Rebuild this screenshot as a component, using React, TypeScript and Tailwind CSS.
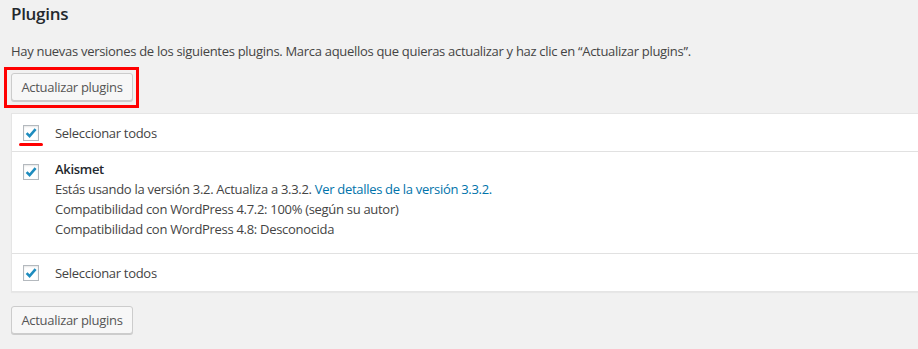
import React from "react";

const font = { fontFamily: '"Segoe UI", "Open Sans", "Noto Sans", sans-serif' };

function Check() {
  return (
    <span className="relative inline-flex h-[16px] w-[16px] shrink-0 items-center justify-center border border-[#b4b9be] bg-white shadow-[inset_0_1px_2px_rgba(0,0,0,0.1)]">
      <svg width="14" height="14" viewBox="0 0 14 14" className="absolute left-[0px] top-[0px]">
        <path d="M2.6 7.2 L5.6 10.2 L11.6 3.2" fill="none" stroke="#1e8cbe" strokeWidth="2.6" strokeLinecap="butt" strokeLinejoin="miter" />
      </svg>
    </span>
  );
}

function WPButton() {
  return (
    <button className="h-[28px] w-[122px] rounded-[3px] border border-[#cccccc] bg-[#f7f7f7] text-[13px] leading-[26px] tracking-[-0.3px] text-[#555555] shadow-[0_1px_0_#cccccc]">
      Actualizar plugins
    </button>
  );
}

export default function App() {
  return (
    <div className="h-[349px] w-full overflow-hidden bg-[#f1f1f1] pl-[11px] tracking-[-0.3px] text-[#444444]" style={font}>
      <h2 className="pt-[3px] text-[17px] font-semibold leading-[22px] text-[#23282d]">Plugins</h2>
      <p className="mt-[16px] text-[13px] leading-[20px]">
        Hay nuevas versiones de los siguientes plugins. Marca aquellos que quieras actualizar y haz clic en “Actualizar plugins”.
      </p>
      <div className="relative mt-[12px] w-[122px]">
        <WPButton />
        <div className="pointer-events-none absolute left-[-7px] top-[-6px] h-[41px] w-[135px] border-[3px] border-[#ff0000]" />
      </div>
      <div className="-mr-[20px] mt-[12px] border border-[#e5e5e5] bg-white shadow-[0_1px_1px_rgba(0,0,0,0.04)]">
        <div className="relative flex items-center pb-[10px] pl-[11px] pt-[11px] text-[13px] leading-[16px]">
          <Check />
          <span className="ml-[16px]">Seleccionar todos</span>
          <span className="absolute left-[7px] top-[29px] h-[2.5px] w-[24px] rounded-full bg-[#ff0000]" />
        </div>
        <div className="flex border-t border-[#e1e1e1] pb-[14px] pl-[11px] pt-[7px] text-[13px] leading-[20px]">
          <div className="pt-[5px]">
            <Check />
          </div>
          <div className="ml-[16px]">
            <div className="font-semibold text-[#23282d]">Akismet</div>
            <div>
              Estás usando la versión 3.2. Actualiza a 3.3.2.{" "}
              <span className="text-[#0073aa]">Ver detalles de la versión 3.3.2.</span>
            </div>
            <div>Compatibilidad con WordPress 4.7.2: 100% (según su autor)</div>
            <div>Compatibilidad con WordPress 4.8: Desconocida</div>
          </div>
        </div>
        <div className="flex items-center border-t border-[#e1e1e1] pb-[10px] pl-[11px] pt-[11px] text-[13px] leading-[16px]">
          <Check />
          <span className="ml-[16px]">Seleccionar todos</span>
        </div>
      </div>
      <div className="mt-[14px]">
        <WPButton />
      </div>
    </div>
  );
}
